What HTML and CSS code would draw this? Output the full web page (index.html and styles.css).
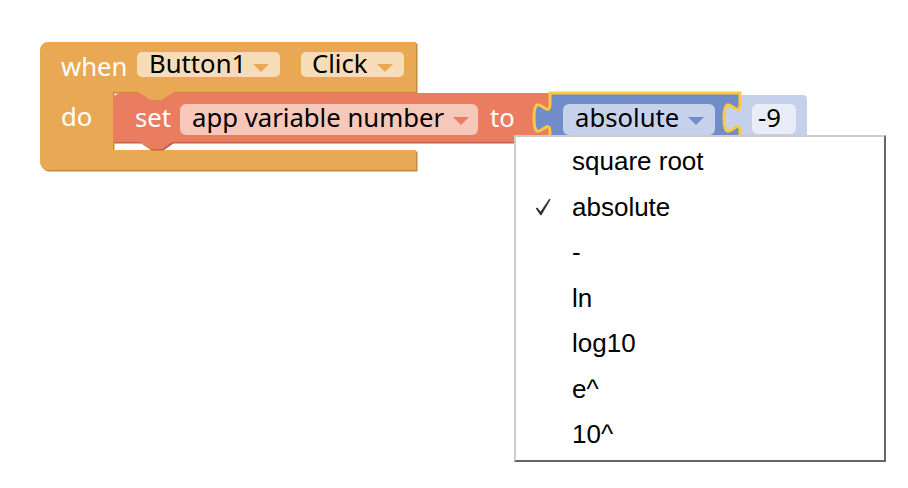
FILE: index.html
```html
<!DOCTYPE html>
<html>
<head>
<meta charset="utf-8">
<link rel="stylesheet" href="styles.css">
</head>
<body>
<div class="workspace">
  <svg class="blocks" width="908" height="200" viewBox="0 0 908 200">
    <!-- event block: when Button1 Click -->
    <g class="event">
      <path class="shade-event" transform="translate(1.5,1.5)" d="M40,50 A8,8 0 0 1 48,42 H416 V92 H174 l-11,10 h-14 l-11,-10 H113 V150 H416 V170 H48 A8,8 0 0 1 40,162 Z"/>
      <path class="fill-event" d="M40,50 A8,8 0 0 1 48,42 H416 V92 H174 l-11,10 h-14 l-11,-10 H113 V150 H416 V170 H48 A8,8 0 0 1 40,162 Z"/>
      <text class="label" x="61" y="76">when</text>
      <rect class="field-event" x="137" y="52" width="143" height="25" rx="5"/>
      <text class="label ftext" x="149" y="73">Button1</text>
      <path class="tri-event" d="M253,64 H269 L261,72 Z"/>
      <rect class="field-event" x="301" y="52" width="103" height="25" rx="5"/>
      <text class="label ftext" x="312" y="73">Click</text>
      <path class="tri-event" d="M377,64 H393 L385,72 Z"/>
      <text class="label" x="61" y="126">do</text>
    </g>
    <!-- set block -->
    <g class="set">
      <path class="shade-set" transform="translate(1.5,1.5)" d="M113,101 A8,8 0 0 1 121,93 H140 l10,7 h12 l10,-7 H550 V142 H172 l-10,7 h-12 l-10,-7 H113 Z"/>
      <path class="fill-set" d="M113,101 A8,8 0 0 1 121,93 H140 l10,7 h12 l10,-7 H550 V142 H172 l-10,7 h-12 l-10,-7 H113 Z"/>
      <text class="label" x="135" y="127">set</text>
      <rect class="field-set" x="180" y="104" width="298" height="31" rx="6"/>
      <text class="label ftext" x="192" y="127">app variable number</text>
      <path class="tri-set" d="M453,117 H469 L461,125 Z"/>
      <text class="label" x="490" y="127">to</text>
    </g>
    <!-- number block -9 -->
    <g class="num">
      <path class="fill-num" d="M740,95 H803 A4,4 0 0 1 807,99 V143 H740 V133 c0,-20 -16,16 -16,-15 s16,5 16,-15 Z"/>
      <rect class="field-num" x="752" y="104" width="44" height="30" rx="6"/>
      <text class="label ftext" x="758" y="127">-9</text>
    </g>
    <!-- math single block (selected) -->
    <g class="math">
      <path class="fill-math" d="M550,93 H740 V103 c0,20 -16,-16 -16,15 s16,-5 16,15 V143 H550 V133 c0,-20 -16,16 -16,-15 s16,5 16,-15 Z"/>
      <rect class="field-math" x="563" y="104" width="152" height="31" rx="6"/>
      <text class="label ftext" x="575" y="127">absolute</text>
      <path class="tri-math" d="M688,117 H704 L696,125 Z"/>
    </g>
  </svg>

  <div class="menu">
    <div class="item"><span class="check"></span><span>square root</span></div>
    <div class="item"><span class="check"><svg width="16" height="18" viewBox="0 0 16 18"><path class="tick" d="M0.8,10.6 L2.2,9.4 L5.6,13.4 L14.3,0.8 L15.6,1.6 L6.4,17.2 L5.4,17.2 Z"/></svg></span><span>absolute</span></div>
    <div class="item"><span class="check"></span><span>-</span></div>
    <div class="item"><span class="check"></span><span>ln</span></div>
    <div class="item"><span class="check"></span><span>log10</span></div>
    <div class="item"><span class="check"></span><span>e^</span></div>
    <div class="item"><span class="check"></span><span>10^</span></div>
  </div>
</div>
</body>
</html>
```
FILE: styles.css
```css
html, body {
  margin: 0;
  background: #ffffff;
}
.workspace {
  position: relative;
  width: 908px;
  height: 488px;
  overflow: hidden;
  background: #ffffff;
}
.blocks {
  position: absolute;
  left: 0;
  top: 0;
}
.label {
  font-family: "Noto Sans", "Open Sans", sans-serif;
  font-size: 25.7px;
  fill: #ffffff;
}
.ftext {
  fill: #000000;
}
.fill-event { fill: #e9a954; }
.shade-event { fill: #c28a3f; }
.field-event { fill: #f7dcb8; }
.tri-event { fill: #e9a954; }

.fill-set { fill: #ea7c60; }
.shade-set { fill: #c3604a; }
.field-set { fill: #f7c7ba; }
.tri-set { fill: #ea7c60; }

.fill-num { fill: #c5d1ea; }
.field-num { fill: #e8edf7; }

.fill-math {
  fill: #708cc9;
  stroke: #fcc93f;
  stroke-width: 3;
}
.field-math { fill: #c6d1eb; }
.tri-math { fill: #708cc9; }

.menu {
  position: absolute;
  left: 514px;
  top: 135px;
  width: 372px;
  height: 327px;
  box-sizing: border-box;
  background: #ffffff;
  border-style: solid;
  border-width: 2px;
  border-color: #cccccc #666666 #666666 #cccccc;
  padding: 2px 0 4px 0;
}
.item {
  display: flex;
  align-items: center;
  height: 45.5px;
  padding-left: 19px;
  font-family: "Liberation Sans", Arial, sans-serif;
  font-size: 26px;
  color: #000000;
}
.check {
  flex: none;
  width: 37px;
  display: flex;
  align-items: center;
}
.tick {
  fill: #333333;
}
```
